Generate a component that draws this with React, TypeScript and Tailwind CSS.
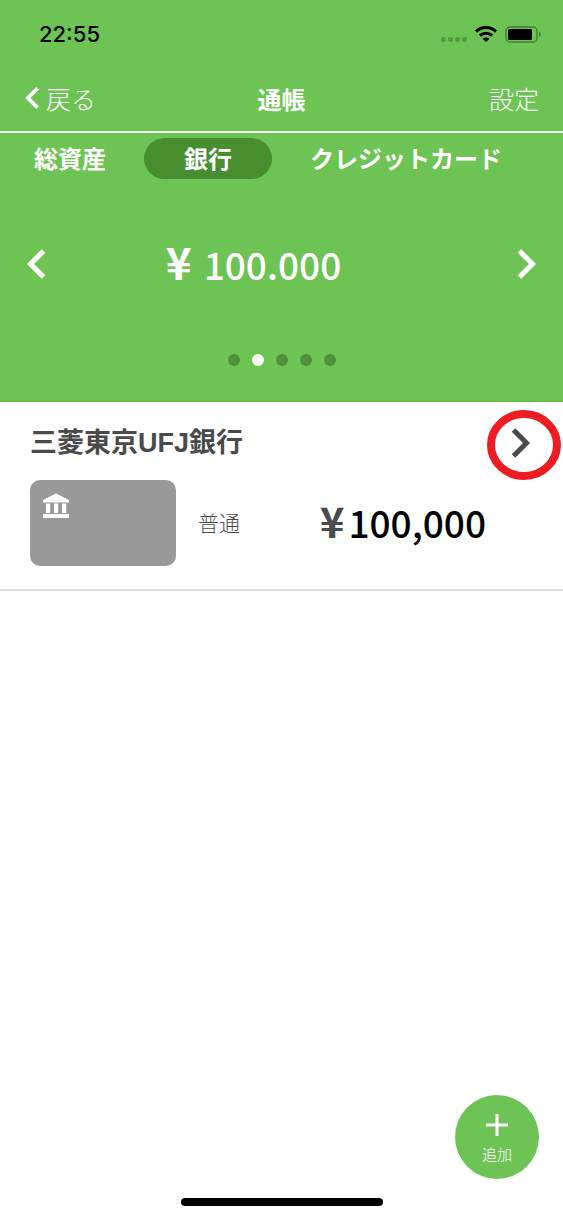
import { useState } from 'react';

const TABS = ['総資産', '銀行', 'クレジットカード'];
const PAGES = [0, 1, 2, 3, 4];

const ACCOUNTS = [
  { id: 1, bank: '三菱東京UFJ銀行', type: '普通', balance: 100000 },
];

function Chevron({ dir, className }: { dir: 'left' | 'right'; className?: string }) {
  return (
    <svg viewBox="0 0 20 32" fill="none" stroke="currentColor" strokeWidth={5} className={className} aria-hidden="true">
      {dir === 'left' ? <path d="M17.5 3 4.5 16l13 13" /> : <path d="M2.5 3l13 13-13 13" />}
    </svg>
  );
}

function StatusBar() {
  return (
    <div className="flex h-[68px] items-center justify-between pl-[39px] pr-[21px] text-black">
      <span className="font-['Inter',sans-serif] text-[22px] font-medium leading-7">22:55</span>
      <div className="flex items-center gap-2">
        <svg width="26" height="16" viewBox="0 0 26 16" fill="#549a3f" aria-hidden="true">
          <rect x="0" y="11" width="5" height="5" rx="2" />
          <rect x="7" y="11" width="5" height="5" rx="2" />
          <rect x="14" y="11" width="5" height="5" rx="2" />
          <rect x="21" y="11" width="5" height="5" rx="2" />
        </svg>
        <svg width="22" height="16" viewBox="0 0 22 16" fill="none" stroke="#000" strokeWidth={3} aria-hidden="true">
          <path d="M1 5.6C6.6.2 15.4.2 21 5.6" />
          <path d="M4.9 9.7c3.5-3.2 8.7-3.2 12.2 0" />
          <path d="M11 16 7.6 12.7c1.9-1.7 4.9-1.7 6.8 0z" fill="#000" stroke="none" />
        </svg>
        <svg width="37" height="17" viewBox="0 0 37 17" aria-hidden="true">
          <rect x="1" y="1" width="31" height="15" rx="4" fill="none" stroke="#467d36" strokeWidth={1.4} />
          <rect x="3" y="3" width="24" height="11" rx="1.5" fill="#000" />
          <path d="M34 6c2.8.7 2.8 4.3 0 5z" fill="#467d36" />
        </svg>
      </div>
    </div>
  );
}

export default function App() {
  const [tab, setTab] = useState(1);
  const [page, setPage] = useState(1);

  return (
    <div className="relative flex min-h-screen flex-col bg-white font-['Noto_Sans_CJK_JP',sans-serif] text-[#4a4a4a]">
      <header className="border-b border-[#58b63e] bg-[#6dc354] text-white">
        <StatusBar />

        {/* ナビゲーション */}
        <div className="grid h-[65px] grid-cols-3 items-center border-b-2 border-white/90 pb-0.5 pl-6 pr-6 text-2xl">
          <button className="flex items-center gap-1.5 justify-self-start text-[25px] font-light">
            <Chevron dir="left" className="h-6 w-4" />
            戻る
          </button>
          <h1 className="justify-self-center font-bold">通帳</h1>
          <button className="justify-self-end text-[25px] font-light">設定</button>
        </div>

        <nav className="flex items-center gap-[38px] pl-[34px] pt-[5px]">
          {TABS.map((t, i) => (
            <button
              key={t}
              onClick={() => setTab(i)}
              className={`h-[41px] whitespace-nowrap rounded-full pb-0.5 text-2xl font-bold ${i === tab ? 'bg-[#478e2f] px-10' : ''}`}
            >
              {t}
            </button>
          ))}
        </nav>

        <div className="flex h-[170px] items-center justify-between px-[26px]">
          <button aria-label="前へ" onClick={() => setPage(Math.max(0, page - 1))}>
            <Chevron dir="left" className="h-8 w-5" />
          </button>
          <p className="flex items-baseline gap-3 pb-1 pr-14 font-bold">
            <span className="text-[44px] leading-10">¥</span>
            <span className="text-[37px] font-medium leading-10">100.000</span>
          </p>
          <button aria-label="次へ" onClick={() => setPage(Math.min(4, page + 1))}>
            <Chevron dir="right" className="h-8 w-5" />
          </button>
        </div>

        <div className="flex h-[52px] justify-center gap-3 pt-[5px]">
          {PAGES.map(p => (
            <button
              key={p}
              aria-label={`${p + 1}ページ`}
              onClick={() => setPage(p)}
              className={`size-3 rounded-full ${p === page ? 'bg-white' : 'bg-[#4f903c]'}`}
            />
          ))}
        </div>
      </header>

      {/* 口座一覧 */}
      <main className="flex-1">
        {ACCOUNTS.map(a => (
          <section key={a.id} className="border-b-2 border-[#dcdcdc] pb-[23px] pl-[30px]">
            <div className="flex h-[78px] items-center justify-between pr-8 pt-1">
              <h2 className="font-['Liberation_Sans','Noto_Sans_CJK_JP',sans-serif] text-[27px] font-bold">{a.bank}</h2>
              <button aria-label="口座の詳細" className="relative">
                <Chevron dir="right" className="h-8 w-5" />
                <svg viewBox="0 0 74 70" fill="none" className="absolute -left-6 -top-[17px] h-[70px] w-[74px] max-w-none" aria-hidden="true">
                  <ellipse cx="37" cy="35" rx="33" ry="31" stroke="#ed1c24" strokeWidth={8} />
                </svg>
              </button>
            </div>
            <div className="flex items-center pr-[77px]">
              <div className="h-[86px] w-[146px] rounded-[10px] bg-[#999] pl-[13px] pt-[13px]">
                <svg width="26" height="26" viewBox="0 0 26 26" fill="#fff" aria-hidden="true">
                  <path d="M13 .5 26 7v2.5H0V7z" />
                  <path d="M3 10.5h4.2v9.5H3zM11 10.5h4.2v9.5H11zM19 10.5h4.2v9.5H19z" />
                  <path d="M0 21h26v4H0z" />
                </svg>
              </div>
              <span className="ml-[22px] text-[21px] font-light">{a.type}</span>
              <p className="ml-auto flex items-baseline gap-1 pb-1 font-bold">
                <span className="text-[42px] leading-10">¥</span>
                <span className="text-[37px] font-medium leading-10 text-black">{a.balance.toLocaleString('ja-JP')}</span>
              </p>
            </div>
          </section>
        ))}
      </main>

      <button className="fixed bottom-[39px] right-6 flex size-[84px] flex-col items-center justify-center gap-2 rounded-full bg-[#6dc354] pt-1 text-white">
        <svg width="22" height="22" viewBox="0 0 22 22" stroke="currentColor" strokeWidth={3} aria-hidden="true">
          <path d="M11 0v22M0 11h22" />
        </svg>
        <span className="text-[15px] font-light leading-5">追加</span>
      </button>

      <div className="fixed bottom-3 left-1/2 h-2 w-[202px] -translate-x-1/2 rounded-full bg-black" />
    </div>
  );
}
